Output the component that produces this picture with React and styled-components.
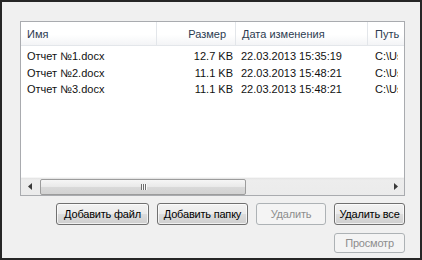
import React from 'react'
import styled, { createGlobalStyle } from 'styled-components'

const files = [
    { name: 'Отчет №1.docx', size: '12.7 KB', date: '22.03.2013 15:35:19', path: 'C:\\Users\\Documents' },
    { name: 'Отчет №2.docx', size: '11.1 KB', date: '22.03.2013 15:48:21', path: 'C:\\Users\\Documents' },
    { name: 'Отчет №3.docx', size: '11.1 KB', date: '22.03.2013 15:48:21', path: 'C:\\Users\\Documents' },
]

export default function App() {
    return (
        <>
            <GlobalStyle />
            <Frame>
                <ListBox>
                    <Header>
                        <HeadCell $w={136}>Имя</HeadCell>
                        <HeadCell $w={79} $right>Размер</HeadCell>
                        <HeadCell $w={132}>Дата изменения</HeadCell>
                        <HeadCell $w={36} $last>Путь</HeadCell>
                    </Header>
                    <Rows>
                        {files.map((f) => (
                            <Row key={f.name}>
                                <Cell $w={136}>{f.name}</Cell>
                                <Cell $w={79} $right>{f.size}</Cell>
                                <Cell $w={132} $pl={5}>{f.date}</Cell>
                                <Cell $w={30} $pl={7}>{f.path}</Cell>
                            </Row>
                        ))}
                    </Rows>
                    <ScrollBar>
                        <Arrow>
                            <svg width="4" height="7" viewBox="0 0 4 7">
                                <path d="M4 0 L0 3.5 L4 7 Z" fill="#3a3a3a" />
                            </svg>
                        </Arrow>
                        <Track>
                            <Thumb>
                                <Grip>
                                    <i /><i /><i />
                                </Grip>
                            </Thumb>
                        </Track>
                        <Arrow>
                            <svg width="4" height="7" viewBox="0 0 4 7">
                                <path d="M0 0 L4 3.5 L0 7 Z" fill="#3a3a3a" />
                            </svg>
                        </Arrow>
                    </ScrollBar>
                </ListBox>
                <ButtonRow>
                    <Button $w={93}>Добавить файл</Button>
                    <Button $w={91}>Добавить папку</Button>
                    <Button $w={70} disabled>Удалить</Button>
                    <Button $w={71}>Удалить все</Button>
                </ButtonRow>
                <PreviewRow>
                    <Button $w={71} $h={20} disabled>Просмотр</Button>
                </PreviewRow>
            </Frame>
        </>
    )
}

const GlobalStyle = createGlobalStyle`
    body {
        margin: 0;
        font-family: 'Liberation Sans', Arial, sans-serif;
        font-size: 11px;
    }
`

const Frame = styled.div`
    box-sizing: border-box;
    width: 422px;
    height: 260px;
    border: 2px solid #262626;
    background-color: #f0f0f0;
    padding: 19px 15px 0 18px;
    display: flex;
    flex-direction: column;
`

const ListBox = styled.div`
    box-sizing: border-box;
    width: 385px;
    height: 175px;
    border: 1px solid #a9abaf;
    background-color: #fff;
    display: flex;
    flex-direction: column;
    overflow: hidden;
`

const Header = styled.div`
    display: flex;
    height: 23px;
    flex-shrink: 0;
    border-bottom: 1px solid #e3e6ea;
    background: linear-gradient(#ffffff 0%, #ffffff 55%, #f3f4f6 100%);
`

const HeadCell = styled.div`
    box-sizing: border-box;
    width: ${(p) => p.$w}px;
    flex: ${(p) => (p.$last ? '1' : 'none')};
    display: flex;
    align-items: center;
    justify-content: ${(p) => (p.$right ? 'flex-end' : 'flex-start')};
    padding: ${(p) => (p.$right ? '0 9px 0 0' : p.$last ? '0 0 0 7px' : '0 0 0 6px')};
    border-right: ${(p) => (p.$last ? 'none' : '1px solid #e3e6ea')};
    color: #2c3b50;
    white-space: nowrap;
`

const Rows = styled.div`
    flex: 1;
    padding-top: 2px;
`

const Row = styled.div`
    display: flex;
    height: 16.5px;
    align-items: center;
    color: #111;
`

const Cell = styled.div`
    box-sizing: border-box;
    width: ${(p) => p.$w}px;
    flex: none;
    overflow: hidden;
    white-space: nowrap;
    text-align: ${(p) => (p.$right ? 'right' : 'left')};
    padding: ${(p) => (p.$right ? '0 3px 0 0' : `0 0 0 ${p.$pl ?? 6}px`)};
`

const ScrollBar = styled.div`
    display: flex;
    height: 17px;
    flex-shrink: 0;
    background: linear-gradient(#e3e3e3 0px, #ededed 2px, #ebebeb 100%);
    border-top: 1px solid #f6f6f6;
`

const Arrow = styled.div`
    width: 17px;
    display: flex;
    align-items: center;
    justify-content: center;
`

const Track = styled.div`
    flex: 1;
    display: flex;
    align-items: center;
    padding-left: 2px;
`

const Thumb = styled.div`
    box-sizing: border-box;
    width: 206px;
    height: 16px;
    border: 1px solid #9c9c9c;
    border-radius: 2px;
    background: linear-gradient(#f6f6f6 0%, #e9e9e9 50%, #d9d9d9 52%, #d2d2d2 100%);
    display: flex;
    align-items: center;
    justify-content: center;
`

const Grip = styled.div`
    display: flex;
    gap: 1px;

    i {
        display: block;
        width: 1px;
        height: 6px;
        background: #6e6e6e;
        box-shadow: 1px 0 0 #fafafa;
    }
`

const ButtonRow = styled.div`
    display: flex;
    justify-content: flex-end;
    gap: 8px;
    margin-top: 7px;
`

const PreviewRow = styled.div`
    display: flex;
    justify-content: flex-end;
    margin-top: 8px;
`

const Button = styled.button`
    box-sizing: border-box;
    width: ${(p) => p.$w}px;
    height: ${(p) => p.$h || 22}px;
    padding: 0;
    font-family: 'Liberation Sans', Arial, sans-serif;
    font-size: 11px;
    letter-spacing: -0.2px;
    white-space: nowrap;
    color: #000;
    border: 1px solid #707070;
    border-radius: 3px;
    background: linear-gradient(#f2f2f2 0%, #ebebeb 48%, #dddddd 50%, #cfcfcf 100%);
    box-shadow: inset 0 0 0 1px rgba(255, 255, 255, 0.7);

    &:disabled {
        color: #8d8d8d;
        border-color: #adb2b5;
        background: #f4f4f4;
        box-shadow: none;
    }
`
